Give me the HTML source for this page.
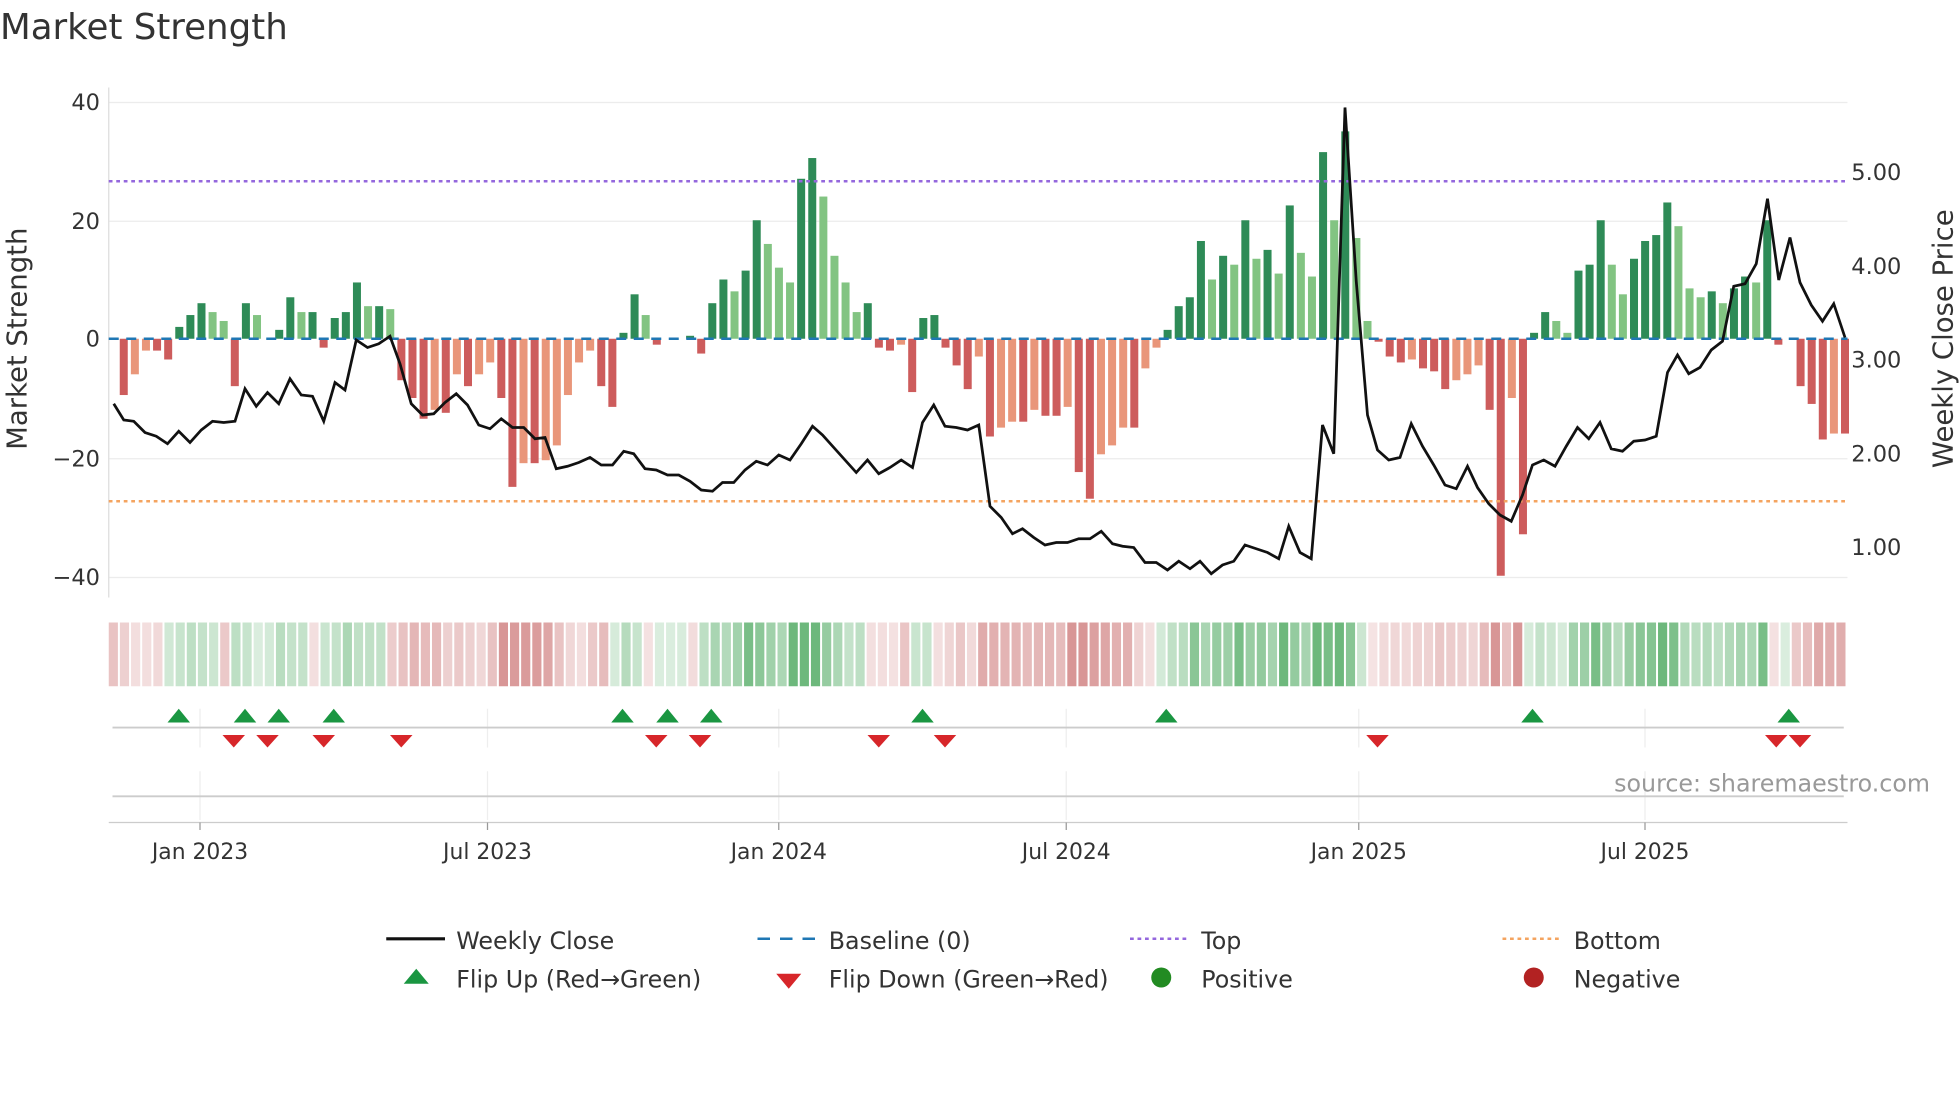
<!DOCTYPE html>
<html><head><meta charset="utf-8"><style>
html,body{margin:0;padding:0;background:#fff;width:1960px;height:1102px;overflow:hidden}
svg{display:block;font-family:"DejaVu Sans","Liberation Sans",sans-serif}
</style></head><body>
<svg id="s" width="1960" height="1102" viewBox="0 0 1568 881.6" xmlns="http://www.w3.org/2000/svg">
<text x="0" y="31" font-size="28.5" fill="#333">Market Strength</text>
<g stroke="#ececec" stroke-width="1">
<line x1="87" y1="82" x2="1478" y2="82"/><line x1="87" y1="177" x2="1478" y2="177"/>
<line x1="87" y1="367" x2="1478" y2="367"/><line x1="87" y1="462" x2="1478" y2="462"/>
</g>
<line x1="87" y1="70" x2="87" y2="478" stroke="#ddd"/>
<g font-size="18" fill="#333" text-anchor="end">
<text x="80" y="88">40</text><text x="80" y="183">20</text><text x="80" y="277">0</text>
<text x="80" y="373">−20</text><text x="80" y="468">−40</text></g>
<g font-size="18" fill="#333">
<text x="1481" y="144">5.00</text><text x="1481" y="219">4.00</text><text x="1481" y="294">3.00</text>
<text x="1481" y="369">2.00</text><text x="1481" y="444">1.00</text></g>
<text transform="translate(21,271) rotate(-90)" font-size="22" fill="#333" text-anchor="middle">Market Strength</text>
<text transform="translate(1562,271) rotate(-90)" font-size="22" fill="#333" text-anchor="middle">Weekly Close Price</text>
<g id="bars"></g>
<line x1="87" y1="271" x2="1478" y2="271" stroke="#1f77b4" stroke-width="2" stroke-dasharray="8,6"/>
<line x1="87" y1="145" x2="1478" y2="145" stroke="#9467dd" stroke-width="2" stroke-dasharray="3,3"/>
<line x1="87" y1="401" x2="1478" y2="401" stroke="#f4a460" stroke-width="2" stroke-dasharray="3,3"/>
<polyline id="price" fill="none" stroke="#111" stroke-width="2.2"/>
<g id="heat"></g>
<g stroke="#eee"><line x1="160" y1="567" x2="160" y2="598"/><line x1="390" y1="567" x2="390" y2="598"/><line x1="623" y1="567" x2="623" y2="598"/><line x1="853" y1="567" x2="853" y2="598"/><line x1="1087" y1="567" x2="1087" y2="598"/><line x1="1316" y1="567" x2="1316" y2="598"/>
<line x1="160" y1="617" x2="160" y2="656"/><line x1="390" y1="617" x2="390" y2="656"/><line x1="623" y1="617" x2="623" y2="656"/><line x1="853" y1="617" x2="853" y2="656"/><line x1="1087" y1="617" x2="1087" y2="656"/><line x1="1316" y1="617" x2="1316" y2="656"/></g>
<line x1="90" y1="582" x2="1475" y2="582" stroke="#ccc" stroke-width="1.5"/>
<line x1="90" y1="637" x2="1475" y2="637" stroke="#ccc" stroke-width="1.5"/>
<g id="marks"></g>
<text x="1544" y="633" font-size="19" fill="#999" text-anchor="end">source: sharemaestro.com</text>
<line x1="87" y1="658" x2="1478" y2="658" stroke="#ccc"/>
<g stroke="#999"><line x1="160" y1="658" x2="160" y2="664"/><line x1="390" y1="658" x2="390" y2="664"/><line x1="623" y1="658" x2="623" y2="664"/><line x1="853" y1="658" x2="853" y2="664"/><line x1="1087" y1="658" x2="1087" y2="664"/><line x1="1316" y1="658" x2="1316" y2="664"/></g>
<g font-size="17.5" fill="#333" text-anchor="middle">
<text x="160" y="687">Jan 2023</text><text x="390" y="687">Jul 2023</text><text x="623" y="687">Jan 2024</text>
<text x="853" y="687">Jul 2024</text><text x="1087" y="687">Jan 2025</text><text x="1316" y="687">Jul 2025</text></g>
<g font-size="19" fill="#333">
<line x1="309" y1="751" x2="356" y2="751" stroke="#111" stroke-width="2.5"/><text x="365" y="759">Weekly Close</text>
<line x1="606" y1="751" x2="653" y2="751" stroke="#1f77b4" stroke-width="2" stroke-dasharray="10,8"/><text x="663" y="759">Baseline (0)</text>
<line x1="904" y1="751" x2="951" y2="751" stroke="#9467dd" stroke-width="2" stroke-dasharray="3,3"/><text x="961" y="759">Top</text>
<line x1="1202" y1="751" x2="1249" y2="751" stroke="#f4a460" stroke-width="2" stroke-dasharray="3,3"/><text x="1259" y="759">Bottom</text>
<polygon points="323,787 333,775 343,787" fill="#1a9641"/><text x="365" y="790">Flip Up (Red→Green)</text>
<polygon points="621,779 641,779 631,791" fill="#d7262a"/><text x="663" y="790">Flip Down (Green→Red)</text>
<circle cx="929" cy="782" r="8" fill="#228b22"/><text x="961" y="790">Positive</text>
<circle cx="1227" cy="782" r="8" fill="#b22222"/><text x="1259" y="790">Negative</text>
</g>
</svg>
<script>
var v=[-9.5,-6,-2,-2,-3.5,2,4,6,4.5,3,-8,6,4,0,1.5,7,4.5,4.5,-1.5,3.5,4.5,9.5,5.5,5.5,5,-7,-10,-13.5,-12,-12.5,-6,-8,-6,-4,-10,-25,-21,-21,-20.5,-18,-9.5,-4,-2,-8,-11.5,1,7.5,4,-1,0,0,0.5,-2.5,6,10,8,11.5,20,16,12,9.5,27,30.5,24,14,9.5,4.5,6,-1.5,-2,-1,-9,3.5,4,-1.5,-4.5,-8.5,-3,-16.5,-15,-14,-14,-12,-13,-13,-11.5,-22.5,-27,-19.5,-18,-15,-15,-5,-1.5,1.5,5.5,7,16.5,10,14,12.5,20,13.5,15,11,22.5,14.5,10.5,31.5,20,35,17,3,-0.5,-3,-4,-3.5,-5,-5.5,-8.5,-7,-6,-4.5,-12,-40,-10,-33,1,4.5,3,1,11.5,12.5,20,12.5,7.5,13.5,16.5,17.5,23,19,8.5,7,8,6,8.5,10.5,9.5,20,-1,0,-8,-11,-17,-16,-16];
var ns="http://www.w3.org/2000/svg",B=document.getElementById('bars'),H=document.getElementById('heat');
function el(p,t,a){var e=document.createElementNS(ns,t);for(var k in a)e.setAttribute(k,a[k]);p.appendChild(e);return e;}
var step=(1476-99)/(v.length-1);
var hs=(1478-87)/v.length;
for(var i=0;i<v.length;i++){var x=99+i*step,y=v[i],p=i?v[i-1]:0,h=Math.abs(y)*4.74;
var c;if(y>=0)c=(y>=p)?'#2e8b57':'#82c482';else c=(y<=p)?'#cd5c5c':'#e9967a';
if(h>0.5)el(B,'rect',{x:x-3.2,y:y>=0?271-h:271,width:6.4,height:h,fill:c});
var a=Math.min(1,0.25+Math.abs(y)/30),hc=y>=0?'rgba(60,160,80,'+(a*0.75)+')':'rgba(190,80,80,'+(a*0.6)+')';
el(H,'rect',{x:87+i*hs,y:498,width:hs-1.6,height:51,fill:hc});}
var pts=[91,323,99,336,107,337,116,346,125,349,134,355,143,345,152,354,161,344,170,337,179,338,188,337,196,311,205,325,214,314,223,323,232,303,241,316,250,317,259,337,268,306,276,312,285,272,294,278,303,275,312,269,320,291,329,323,338,332,347,331,356,322,365,315,374,324,383,340,392,343,401,335,410,342,419,342,428,351,436,350,445,375,454,373,463,370,472,366,481,372,490,372,499,361,507,363,516,375,525,376,534,380,543,380,552,385,561,392,570,393,578,386,587,386,596,376,605,369,614,372,623,364,632,368,641,355,650,341,658,348,667,358,676,368,685,378,694,368,703,379,712,374,721,368,730,374,738,338,747,324,756,341,765,342,774,344,783,340,792,405,801,414,810,427,818,423,827,430,836,436,845,434,854,434,863,431,872,431,881,425,890,435,898,437,907,438,916,450,925,450,934,456,943,449,952,455,960,449,969,459,978,452,987,449,996,436,1005,439,1014,442,1023,447,1031,421,1040,442,1049,447,1058,340,1067,363,1076,86,1085,225,1094,332,1102,360,1111,368,1120,366,1129,339,1138,357,1147,372,1156,388,1165,391,1174,373,1182,390,1191,403,1200,412,1209,417,1218,396,1226,372,1235,368,1244,373,1253,357,1262,342,1271,351,1280,338,1289,359,1298,361,1307,353,1316,352,1325,349,1334,298,1342,284,1351,299,1360,294,1369,280,1378,273,1387,229,1396,227,1405,211,1414,159,1423,224,1432,190,1440,226,1449,244,1458,257,1467,243,1476,270];
var s='';for(var j=0;j<pts.length;j+=2)s+=pts[j]+','+pts[j+1]+' ';document.getElementById('price').setAttribute('points',s);
var M=document.getElementById('marks');
[143,196,223,267,498,534,569,738,933,1226,1431].forEach(function(x){el(M,'polygon',{points:(x-9)+',578 '+x+',567 '+(x+9)+',578',fill:'#1a9641'});});
[187,214,259,321,525,560,703,756,1102,1421,1440].forEach(function(x){el(M,'polygon',{points:(x-9)+',588 '+(x+9)+',588 '+x+',598',fill:'#d7262a'});});
</script>
</body></html>
